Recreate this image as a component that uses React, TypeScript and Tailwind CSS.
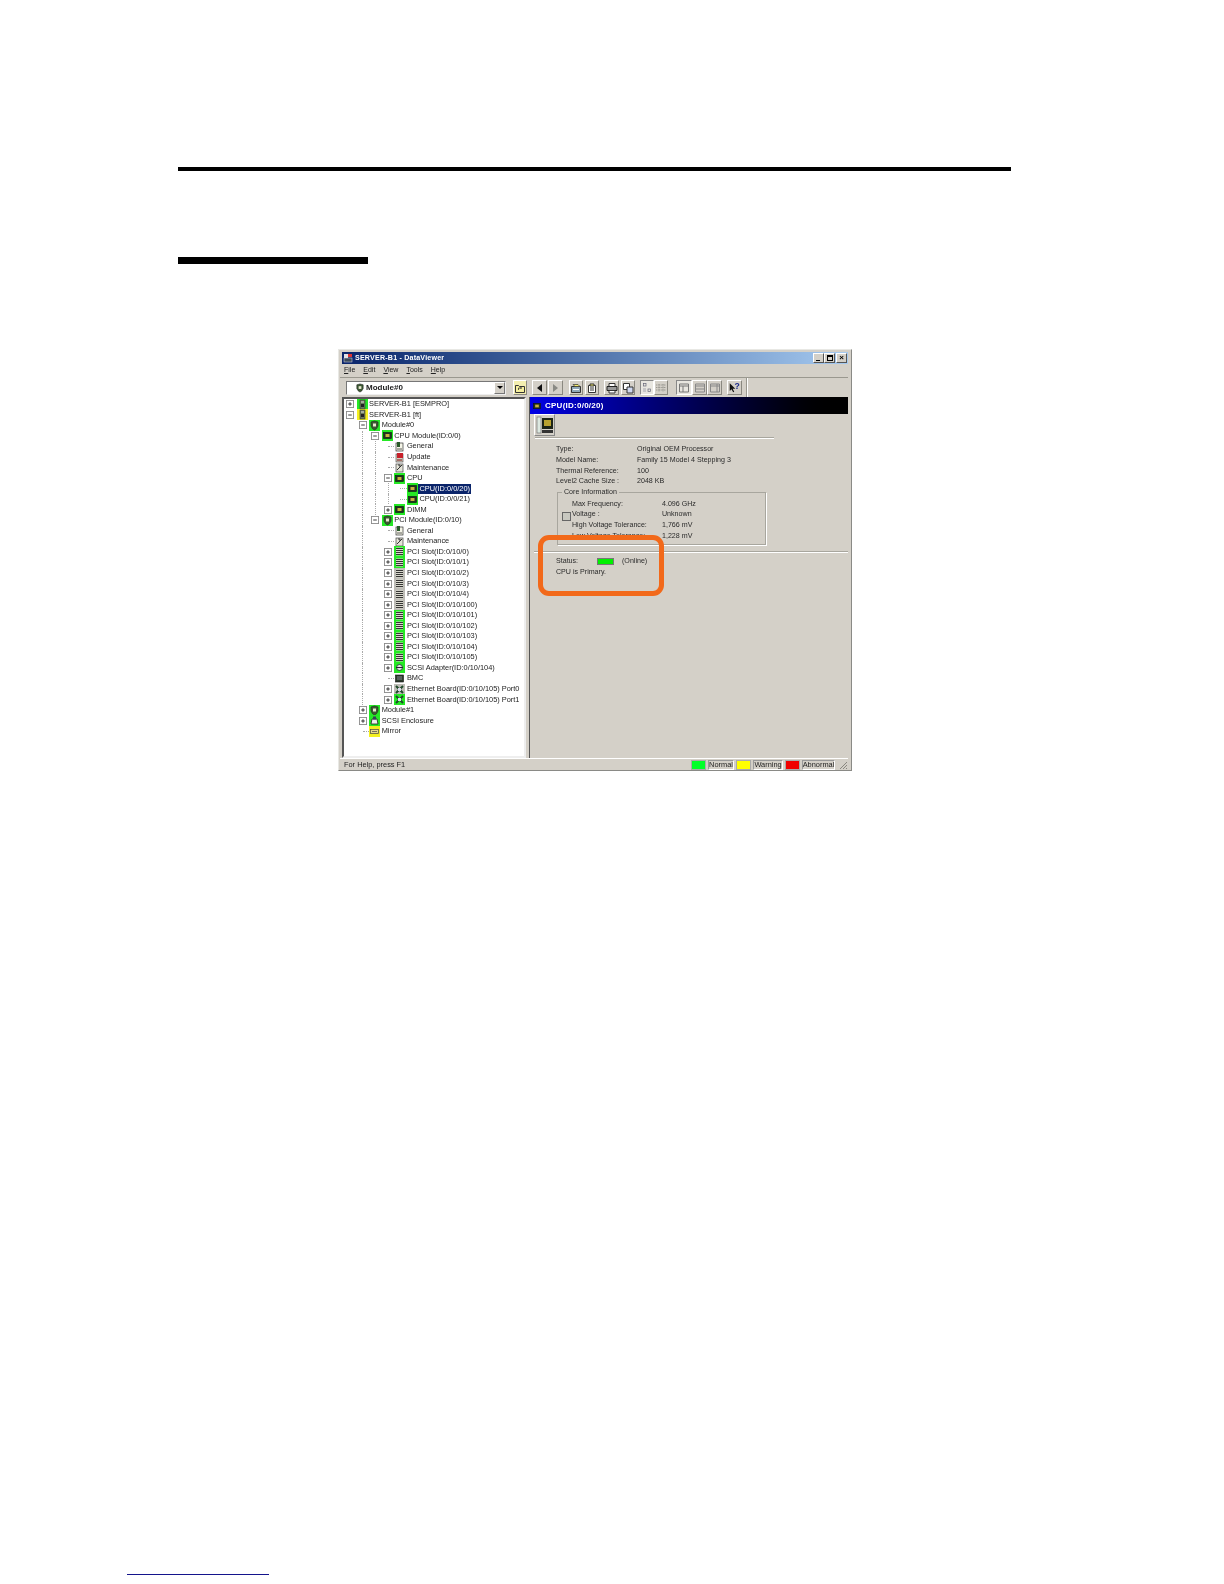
import React from "react";

type Kind = "server" | "module" | "chip" | "doc" | "update" | "maint" | "slot" | "adapter" | "bmc" | "net" | "encl" | "mirror";
type Row = { d: number; e?: "+" | "-"; label: string; bg: string; kind: Kind; g: number[]; sel?: boolean };

const G = "bg-[#25e825]";
const Y = "bg-[#f4f020]";
const S = "bg-[#bdbcb6]";
const N = "bg-transparent";

const slots = (labels: [string, string][]): Row[] =>
  labels.map(([label, bg]) => ({ d: 3, e: "+", label, bg, kind: "slot", g: [1] }));

const rows: Row[] = [
  { d: 0, e: "+", label: "SERVER-B1 [ESMPRO]", bg: G, kind: "server", g: [] },
  { d: 0, e: "-", label: "SERVER-B1 [ft]", bg: Y, kind: "server", g: [] },
  { d: 1, e: "-", label: "Module#0", bg: G, kind: "module", g: [] },
  { d: 2, e: "-", label: "CPU Module(ID:0/0)", bg: G, kind: "chip", g: [1] },
  { d: 3, label: "General", bg: N, kind: "doc", g: [1, 2] },
  { d: 3, label: "Update", bg: N, kind: "update", g: [1, 2] },
  { d: 3, label: "Maintenance", bg: N, kind: "maint", g: [1, 2] },
  { d: 3, e: "-", label: "CPU", bg: G, kind: "chip", g: [1, 2] },
  { d: 4, label: "CPU(ID:0/0/20)", bg: G, kind: "chip", g: [1, 2], sel: true },
  { d: 4, label: "CPU(ID:0/0/21)", bg: G, kind: "chip", g: [1, 2] },
  { d: 3, e: "+", label: "DIMM", bg: G, kind: "chip", g: [1, 2] },
  { d: 2, e: "-", label: "PCI Module(ID:0/10)", bg: G, kind: "module", g: [1] },
  { d: 3, label: "General", bg: N, kind: "doc", g: [1] },
  { d: 3, label: "Maintenance", bg: N, kind: "maint", g: [1] },
  ...slots([
    ["PCI Slot(ID:0/10/0)", G],
    ["PCI Slot(ID:0/10/1)", G],
    ["PCI Slot(ID:0/10/2)", S],
    ["PCI Slot(ID:0/10/3)", S],
    ["PCI Slot(ID:0/10/4)", S],
    ["PCI Slot(ID:0/10/100)", S],
    ["PCI Slot(ID:0/10/101)", G],
    ["PCI Slot(ID:0/10/102)", G],
    ["PCI Slot(ID:0/10/103)", G],
    ["PCI Slot(ID:0/10/104)", G],
    ["PCI Slot(ID:0/10/105)", G],
  ]),
  { d: 3, e: "+", label: "SCSI Adapter(ID:0/10/104)", bg: G, kind: "adapter", g: [1] },
  { d: 3, label: "BMC", bg: N, kind: "bmc", g: [1] },
  { d: 3, e: "+", label: "Ethernet Board(ID:0/10/105) Port0", bg: S, kind: "net", g: [1] },
  { d: 3, e: "+", label: "Ethernet Board(ID:0/10/105) Port1", bg: G, kind: "net", g: [1] },
  { d: 1, e: "+", label: "Module#1", bg: G, kind: "module", g: [] },
  { d: 1, e: "+", label: "SCSI Enclosure", bg: G, kind: "encl", g: [] },
  { d: 1, label: "Mirror", bg: Y, kind: "mirror", g: [] },
];

function Glyph({ kind }: { kind: Kind }) {
  const box = "0 0 11 11";
  switch (kind) {
    case "server":
      return (
        <svg viewBox={box} className="w-full h-full">
          <rect x="3" y="1" width="5" height="9" fill="#6b7a5a" stroke="#333" strokeWidth=".6" />
          <rect x="4" y="2.500" width="3" height="1" fill="#ddd" />
          <rect x="4" y="5" width="3" height="3" fill="#222" />
        </svg>
      );
    case "module":
      return (
        <svg viewBox={box} className="w-full h-full">
          <path d="M2 2 L5.500 1 L9 2 L9 6 Q8 9 5.500 10 Q3 9 2 6 Z" fill="#3b5a32" stroke="#222" strokeWidth=".6" />
          <rect x="4" y="3.500" width="3" height="3" fill="#e8e8d0" />
        </svg>
      );
    case "chip":
      return (
        <svg viewBox={box} className="w-full h-full">
          <rect x="1.500" y="2.500" width="8" height="6" fill="#203020" stroke="#111" strokeWidth=".6" />
          <rect x="3.500" y="4" width="4" height="3" fill="#c9b040" />
        </svg>
      );
    case "doc":
      return (
        <svg viewBox={box} className="w-full h-full">
          <rect x="2" y="2" width="7" height="8" fill="#f5f5e8" stroke="#333" strokeWidth=".7" />
          <rect x="3" y="1" width="3" height="5" fill="#2a5a2a" />
          <path d="M3 8h5" stroke="#333" strokeWidth=".8" />
        </svg>
      );
    case "update":
      return (
        <svg viewBox={box} className="w-full h-full">
          <rect x="2" y="2" width="7" height="8" fill="#d8cfc0" stroke="#444" strokeWidth=".6" />
          <rect x="3" y="1" width="6" height="5" fill="#c8202a" />
          <path d="M3 8h5" stroke="#701010" strokeWidth="1" />
        </svg>
      );
    case "maint":
      return (
        <svg viewBox={box} className="w-full h-full">
          <rect x="2" y="2" width="7" height="8" fill="#e4e4d8" stroke="#444" strokeWidth=".7" />
          <path d="M3 8 L8 3 M4 3h2v2" stroke="#333" strokeWidth="1" fill="none" />
        </svg>
      );
    case "slot":
      return (
        <svg viewBox={box} className="w-full h-full">
          <rect x="2" y="1.500" width="7" height="8" fill="#d8d8cc" />
          <path d="M2 2.500h7M2 4.500h7M2 6.500h7M2 8.500h7" stroke="#222" strokeWidth=".9" />
        </svg>
      );
    case "adapter":
      return (
        <svg viewBox={box} className="w-full h-full">
          <circle cx="5.500" cy="5.500" r="3" fill="#dfe8df" stroke="#223" strokeWidth=".8" />
          <path d="M2 5.500h7" stroke="#223" strokeWidth="1" />
        </svg>
      );
    case "bmc":
      return (
        <svg viewBox={box} className="w-full h-full">
          <rect x="1.500" y="2" width="8" height="7" fill="#2c3a2c" stroke="#111" strokeWidth=".6" />
          <path d="M3 4h5M3 6h5" stroke="#aab" strokeWidth=".7" />
        </svg>
      );
    case "net":
      return (
        <svg viewBox={box} className="w-full h-full">
          <path d="M2 9 L9 2 M2 2 L9 9" stroke="#1f4a2a" strokeWidth="2" />
          <rect x="4" y="4" width="3" height="3" fill="#dde" />
        </svg>
      );
    case "encl":
      return (
        <svg viewBox={box} className="w-full h-full">
          <path d="M2 9 L3 4 L8 4 L9 9 Z" fill="#eee" stroke="#222" strokeWidth=".8" />
          <rect x="4" y="1.500" width="3" height="3" fill="#345" />
        </svg>
      );
    case "mirror":
      return (
        <svg viewBox={box} className="w-full h-full">
          <rect x="1.500" y="3.500" width="8" height="4" fill="#e8d98a" stroke="#444" strokeWidth=".7" />
          <path d="M3 5.500h5" stroke="#444" strokeWidth=".7" />
        </svg>
      );
  }
}

function Expander({ sign }: { sign: "+" | "-" }) {
  return (
    <svg viewBox="0 0 9 9" className="w-[8px] h-[8px] bg-white">
      <rect x=".5" y=".5" width="8" height="8" fill="none" stroke="#8a8a8a" />
      <path d="M2.500 4.500h4" stroke="#222" />
      {sign === "+" && <path d="M4.500 2.500v4" stroke="#222" />}
    </svg>
  );
}

function Cell({ line, children }: { line?: boolean; children?: React.ReactNode }) {
  return (
    <div className="w-[12.6px] shrink-0 h-full flex items-center justify-center">
      {children ?? (line ? <div className="h-full border-l border-dotted border-[#aaa]" /> : null)}
    </div>
  );
}

function TreeRow({ r }: { r: Row }) {
  const cols = [0, 1, 2, 3, 4].slice(0, r.d);
  return (
    <div className="h-[10.56px] flex items-center">
      {cols.map((c) => (
        <Cell key={c} line={r.g.includes(c) || (r.d === 4 && c === 3)} />
      ))}
      <Cell>
        {r.e ? (
          <Expander sign={r.e} />
        ) : (
          <div className="w-full h-full flex items-center justify-end pl-[6px]">
            <div className="w-full border-t border-dotted border-[#aaa]" />
          </div>
        )}
      </Cell>
      <div className={`w-[11px] h-[11px] shrink-0 ${r.bg}`}>
        <Glyph kind={r.kind} />
      </div>
      <span
        className={`ml-[0.5px] px-[1px] leading-[10px] whitespace-nowrap ${
          r.sel ? "bg-[#0a246a] text-white" : "text-[#222]"
        }`}
      >
        {r.label}
      </span>
    </div>
  );
}

function TBtn({ children, w = "w-[15px]", lit, bg = "" }: { children: React.ReactNode; w?: string; lit?: boolean; bg?: string }) {
  const edge = lit
    ? "bg-[#e8e6e0] border border-t-[#888] border-l-[#888] border-b-white border-r-white"
    : "border border-t-white border-l-white border-b-[#8a8880] border-r-[#8a8880]";
  return <div className={`${w} h-[15px] flex items-center justify-center shrink-0 ${edge} ${bg}`}>{children}</div>;
}

const Ico = ({ children }: { children: React.ReactNode }) => (
  <svg viewBox="0 0 12 12" className="w-[12px] h-[12px]">
    {children}
  </svg>
);

function Toolbar() {
  return (
    <div className="h-[20px] flex items-center pl-[6px] border-t border-t-[#9a988f]">
      <div className="w-[160px] h-[14px] bg-white border border-t-[#777] border-l-[#777] border-b-[#eee] border-r-[#eee] flex items-center shrink-0">
        <div className="w-[10px] h-[10px] ml-[8px]">
          <Glyph kind="module" />
        </div>
        <span className="ml-[1px] font-bold text-[#222] text-[8px]">Module#0</span>
        <div className="ml-auto w-[11px] h-[12px] bg-[#d4d0c8] border border-t-white border-l-white border-b-[#777] border-r-[#777] flex items-center justify-center">
          <div className="w-0 h-0 border-x-[3px] border-x-transparent border-t-[3px] border-t-black" />
        </div>
      </div>
      <div className="w-[7px] shrink-0" />
      <TBtn w="w-[14px]" bg="bg-[#f3eeb0]">
        <Ico>
          <path d="M1.500 3.500h3l1 1h5v6h-9z" fill="#f5ef9c" stroke="#333" />
          <path d="M4.500 8V6h3M6.500 5l1 1-1 1" stroke="#333" fill="none" strokeWidth=".8" />
        </Ico>
      </TBtn>
      <div className="w-[5px] shrink-0" />
      <TBtn w="w-[15px]">
        <div className="w-0 h-0 border-y-[4.500px] border-y-transparent border-r-[5px] border-r-[#111]" />
      </TBtn>
      <div className="w-[1px] shrink-0" />
      <TBtn w="w-[15px]">
        <div className="w-0 h-0 border-y-[4.500px] border-y-transparent border-l-[5px] border-l-[#8a8a84]" />
      </TBtn>
      <div className="w-[6px] shrink-0" />
      <TBtn w="w-[14px]">
        <Ico>
          <path d="M1.500 4.500h9v6h-9z" fill="#8fa8b8" stroke="#333" />
          <path d="M3 2.500h5l2 2H5z" fill="#f4ec6a" stroke="#333" strokeWidth=".7" />
          <path d="M3 7.500h6" stroke="#fff" />
        </Ico>
      </TBtn>
      <div className="w-[2px] shrink-0" />
      <TBtn w="w-[14px]">
        <Ico>
          <path d="M2.500 3.500h7v7h-7z" fill="#fff" stroke="#333" />
          <path d="M4 2h4v2H4z" fill="#f4ec6a" stroke="#333" />
          <path d="M4 6h4M4 8h4" stroke="#333" />
        </Ico>
      </TBtn>
      <div className="w-[5px] shrink-0" />
      <TBtn w="w-[15px]">
        <Ico>
          <path d="M3 1.500h6v3H3z" fill="#fff" stroke="#333" />
          <path d="M1 4.500h10v4H1z" fill="#999" stroke="#222" />
          <path d="M3 8.500h6v2.500H3z" fill="#fff" stroke="#333" />
        </Ico>
      </TBtn>
      <div className="w-[2px] shrink-0" />
      <TBtn w="w-[14px]">
        <Ico>
          <path d="M1.500 1.500h6v6h-6z" fill="#fff" stroke="#333" />
          <path d="M5 5h6v6H5z" fill="#cfd8f0" stroke="#333" />
        </Ico>
      </TBtn>
      <div className="w-[5px] shrink-0" />
      <div className="flex shrink-0">
        <TBtn w="w-[14px]" lit>
          <Ico>
            <rect x="2.500" y="1.500" width="2.500" height="2.500" fill="none" stroke="#667" strokeWidth=".7" />
            <rect x="7" y="7" width="2.500" height="2.500" fill="none" stroke="#667" strokeWidth=".7" />
            <path d="M2 7h3M2 9h3" stroke="#889" strokeWidth=".7" />
          </Ico>
        </TBtn>
        <TBtn w="w-[14px]">
          <Ico>
            <path d="M1 3h10M1 5.500h10M1 8h10M4 2v8M8 2v8" stroke="#8a8a84" strokeWidth=".8" strokeDasharray="1 .6" />
          </Ico>
        </TBtn>
      </div>
      <div className="w-[8px] shrink-0" />
      <div className="flex shrink-0">
        <TBtn w="w-[16px]" lit>
          <Ico>
            <path d="M1.500 2h9v8h-9z M1.500 4h9 M5 4v6" fill="none" stroke="#777" />
          </Ico>
        </TBtn>
        <TBtn w="w-[15px]">
          <Ico>
            <path d="M1.500 2h9v8h-9z M1.500 7h9 M1.500 4h9" fill="none" stroke="#888" />
          </Ico>
        </TBtn>
        <TBtn w="w-[15px]">
          <Ico>
            <path d="M1.500 2h9v8h-9z M8 2v8 M1.500 4h9" fill="none" stroke="#888" />
          </Ico>
        </TBtn>
      </div>
      <div className="w-[5px] shrink-0" />
      <TBtn w="w-[15px]">
        <svg viewBox="0 0 15 13" className="w-[14px] h-[13px]">
          <path d="M2 1.500v9l2-2 2 3.500 1.200-.6-1.800-3.400h3z" fill="#111" />
          <text x="7.500" y="8.500" fontSize="10" fontWeight="700" fill="#1b2a8c" fontFamily="Liberation Sans, sans-serif">?</text>
        </svg>
      </TBtn>
      <div className="w-[4px] shrink-0" />
      <div className="w-[2px] h-[20px] border-l border-l-[#9a988f] border-r border-r-white shrink-0" />
    </div>
  );
}

const Info = ({ label, value }: { label: string; value: string }) => (
  <div className="h-[10.6px] flex items-center">
    <span className="w-[81px] shrink-0 whitespace-nowrap">{label}</span>
    <span className="whitespace-nowrap">{value}</span>
  </div>
);

const Core = ({ label, value }: { label: string; value: string }) => (
  <div className="h-[10.6px] flex items-center">
    <span className="w-[90px] shrink-0 whitespace-nowrap">{label}</span>
    <span className="whitespace-nowrap">{value}</span>
  </div>
);

const WinBtn = ({ children }: { children: React.ReactNode }) => (
  <div className="w-[11px] h-[10px] bg-[#d4d0c8] border border-t-white border-l-white border-b-[#555] border-r-[#555] flex items-center justify-center text-black shrink-0">
    {children}
  </div>
);

function Legend({ swatch, text, w }: { swatch: string; text: string; w: string }) {
  return (
    <>
      <div className={`w-[15px] h-[10px] shrink-0 border border-[#aaa] ${swatch}`} />
      <div className={`${w} h-[10px] mx-[2px] shrink-0 flex items-center justify-center border border-t-[#999] border-l-[#999] border-b-white border-r-white text-[#222] leading-none`}>
        {text}
      </div>
    </>
  );
}

export default function App() {
  return (
    <div className="w-[1224px] h-[1584px] bg-white flex flex-col overflow-hidden font-['Liberation_Sans',Arial,sans-serif]">
      <div className="ml-[178px] mt-[167px] w-[833px] h-[4px] bg-black shrink-0" />
      <div className="ml-[178px] mt-[86px] w-[190px] h-[7px] bg-black shrink-0" />

      <div className="ml-[338px] mt-[85px] w-[514px] h-[422px] bg-[#d4d0c8] border border-t-[#e8e8e4] border-l-[#e8e8e4] border-b-[#8a8a86] border-r-[#8a8a86] pl-[1px] pr-[3px] shrink-0 flex flex-col text-[7.4px] text-[#2a2a2a] relative blur-[0.45px]">
        <div className="h-[12px] ml-[2px] mt-[2px] shrink-0 bg-gradient-to-r from-[#0a246a] to-[#a6caf0] flex items-center pl-[1px] pr-[1px]">
          <div className="w-[10px] h-[10px] shrink-0">
            <svg viewBox="0 0 10 10" className="w-full h-full">
              <rect x="1" y="1" width="4" height="4" fill="#dfe3e8" />
              <rect x="5" y="1" width="4" height="3" fill="#d33" />
              <rect x="1" y="5" width="8" height="4" fill="#3a4a5a" stroke="#dde" strokeWidth=".5" />
            </svg>
          </div>
          <span className="ml-[2px] text-white font-bold text-[7.1px] tracking-[0.2px] whitespace-nowrap">SERVER-B1 - DataViewer</span>
          <div className="ml-auto flex items-center">
            <WinBtn>
              <div className="w-[4px] h-[1px] bg-black mt-[4px] mr-[2px]" />
            </WinBtn>
            <WinBtn>
              <div className="w-[6px] h-[6px] border border-black border-t-2" />
            </WinBtn>
            <div className="w-[1px]" />
            <WinBtn>
              <span className="text-[8px] font-bold leading-none">×</span>
            </WinBtn>
          </div>
        </div>

        <div className="h-[13px] shrink-0 flex items-center gap-[8px] pl-[4px] text-[#222] text-[7px]">
          <span><u>F</u>ile</span>
          <span><u>E</u>dit</span>
          <span><u>V</u>iew</span>
          <span><u>T</u>ools</span>
          <span><u>H</u>elp</span>
        </div>

        <Toolbar />

        <div className="flex-1 min-h-0 flex">
          <div className="w-[184px] ml-[2px] shrink-0 bg-white border-2 border-t-[#555] border-l-[#555] border-b-[#eee] border-r-[#eee] overflow-hidden">
            <div>
              {rows.map((r, i) => (
                <TreeRow key={i} r={r} />
              ))}
            </div>
          </div>

          <div className="flex-1 min-w-0 ml-[3px] border-l border-l-[#555] flex flex-col text-[7.1px]">
            <div className="h-[17px] shrink-0 bg-gradient-to-r from-[#0000e6] to-black flex items-center pl-[2px]">
              <div className="w-[10px] h-[10px]">
                <Glyph kind="chip" />
              </div>
              <span className="ml-[3px] text-white font-bold text-[8px] tracking-[0.25px]">CPU(ID:0/0/20)</span>
            </div>
            <div className="h-[23px] pl-[4px] shrink-0">
              <div className="w-[21px] h-[22px] border border-t-white border-l-white border-b-[#888] border-r-[#888] flex items-center justify-center">
                <svg viewBox="0 0 18 20" className="w-[18px] h-[20px]">
                  <rect x="1" y="2" width="4" height="16" fill="#dce8e0" stroke="#777" strokeWidth=".7" />
                  <rect x="6" y="3" width="11" height="11" fill="#1c2417" />
                  <rect x="8" y="5" width="7" height="6" fill="#b8a230" />
                  <rect x="6" y="15" width="11" height="3" fill="#333" />
                </svg>
              </div>
            </div>
            <div className="h-[2px] w-[239px] ml-[5px] shrink-0 border-t border-t-[#a8a69e] border-b border-b-white" />
            <div className="pl-[26px] pt-[5.5px] shrink-0">
              <Info label="Type:" value="Original OEM Processor" />
              <Info label="Model Name:" value="Family 15 Model 4 Stepping 3" />
              <Info label="Thermal Reference:" value="100" />
              <Info label="Level2 Cache Size :" value="2048 KB" />
            </div>
            <div className="ml-[27px] mt-[5px] w-[209px] h-[53px] shrink-0 border border-[#a8a69e] shadow-[1px_1px_0_#fff] flex flex-col pl-[14px] relative">
              <span className="absolute -top-[5px] left-[4px] px-[2px] leading-[9px] bg-[#d4d0c8]">Core Information</span>
              <div className="mt-[6px]">
                <Core label="Max Frequency:" value="4.096 GHz" />
                <Core label="Voltage :" value="Unknown" />
                <Core label="High Voltage Tolerance:" value="1,766 mV" />
                <Core label="Low Voltage Tolerance:" value="1,228 mV" />
              </div>
              <div className="absolute left-[4px] top-[19px] w-[9px] h-[9px] border border-[#666] bg-[#c8c8c0]" />
            </div>
            <div className="h-[2px] mt-[6px] ml-[4px] shrink-0 border-t border-t-[#a8a69e] border-b border-b-white" />
            <div className="pl-[26px] pt-[3.5px] shrink-0">
              <div className="h-[10.6px] flex items-center">
                <span className="w-[41px] shrink-0">Status:</span>
                <div className="w-[17px] h-[7px] bg-[#00f000] border border-[#777] shrink-0" />
                <span className="ml-[8px]">(Online)</span>
              </div>
              <div className="h-[11px] flex items-center">CPU is Primary.</div>
            </div>
          </div>
        </div>

        <div className="h-[12px] shrink-0 border-t border-t-white flex items-center pl-[4px] text-[#222]">
          <span>For Help, press F1</span>
          <div className="ml-auto flex items-center">
            <Legend swatch="bg-[#00ff2a]" text="Normal" w="w-[26px]" />
            <Legend swatch="bg-[#ffff00]" text="Warning" w="w-[30px]" />
            <Legend swatch="bg-[#f00000]" text="Abnormal" w="w-[33px]" />
            <svg viewBox="0 0 10 10" className="w-[10px] h-[10px] shrink-0 ml-[1px]">
              <path d="M9 2 L2 9 M9 5 L5 9 M9 8 L8 9" stroke="#8a8880" strokeWidth="1" />
            </svg>
          </div>
        </div>

        <div className="absolute left-[199px] top-[185px] w-[126px] h-[61px] border-[5px] border-[#f2691a] rounded-[11px]" />
      </div>

      <div className="ml-[127px] mt-[803px] w-[142px] h-[1px] bg-[#14148c] shrink-0" />
    </div>
  );
}
